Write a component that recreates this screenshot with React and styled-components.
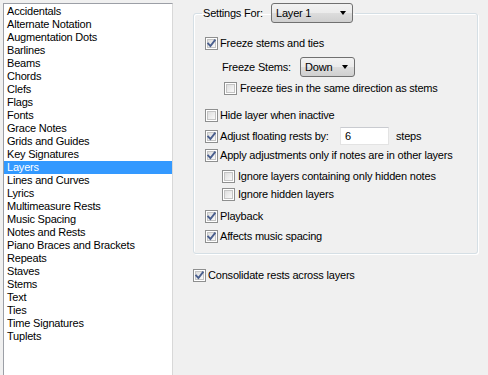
import styled, { createGlobalStyle } from "styled-components";

const Global = createGlobalStyle`
  html, body {
    margin: 0;
    padding: 0;
    background: #f0f0f0;
    overflow: hidden;
    height: 375px;
  }
  body {
    font-family: "Liberation Sans", Arial, sans-serif;
    font-size: 11px;
    letter-spacing: -0.2px;
    color: #000;
  }
`;

const Page = styled.div`
  display: flex;
  align-items: flex-start;
  width: 488px;
  height: 375px;
`;

const ListBox = styled.div`
  margin: 3px 0 0 3px;
  width: 170px;
  height: 390px;
  box-sizing: border-box;
  background: #fff;
  border: 1px solid #9c9fa6;
  border-right-color: #d8d8d8;
  padding-top: 1px;
`;

const Item = styled.div`
  height: 13px;
  line-height: 13px;
  padding-left: 3px;
  white-space: nowrap;
  background: ${(p) => (p.selected ? "#3399ff" : "transparent")};
  color: ${(p) => (p.selected ? "#fff" : "#000")};
`;

const Side = styled.div`
  margin-left: 20px;
  display: flex;
  flex-direction: column;
`;

const Group = styled.fieldset`
  margin: 3px 0 0 0;
  padding: 0 0 8px 8px;
  width: 285px;
  box-sizing: border-box;
  border: 1px solid #d5dfe5;
  border-radius: 3px;
  box-shadow: inset 1px 1px 0 #fff, 1px 1px 0 #fff;
  min-inline-size: 0;
`;

const Legend = styled.legend`
  padding: 0 2px 0 1px;
  display: flex;
  align-items: center;
  height: 20px;
`;

const LegendLabel = styled.span`
  width: 68px;
`;

const Combo = styled.div`
  display: flex;
  align-items: center;
  justify-content: space-between;
  box-sizing: border-box;
  width: ${(p) => p.width}px;
  height: ${(p) => p.height || 20}px;
  padding: 0 6px 0 4px;
  border: 1px solid #707070;
  border-radius: 3px;
  background: linear-gradient(#f2f2f2 0%, #ebebeb 50%, #dddddd 50%, #cfcfcf 100%);
`;

const Arrow = styled.span`
  width: 0;
  height: 0;
  border-left: 3.5px solid transparent;
  border-right: 3.5px solid transparent;
  border-top: 4px solid #000;
`;

const Row = styled.div`
  display: flex;
  align-items: center;
  height: ${(p) => p.h || 18}px;
  margin-top: ${(p) => p.top || 0}px;
  padding-left: ${(p) => p.indent || 0}px;
  white-space: nowrap;
`;

const BoxWrap = styled.span`
  display: inline-flex;
  width: 13px;
  height: 13px;
  margin-right: ${(p) => p.gap || 3}px;
  flex: none;
`;

const FieldLabel = styled.span`
  width: ${(p) => p.width}px;
`;

const TextBox = styled.div`
  box-sizing: border-box;
  width: 49px;
  height: 18px;
  background: #fff;
  border: 1px solid #e3e3e3;
  border-top-color: #c9cbd0;
  padding: 1px 0 0 4px;
  line-height: 15px;
  margin-right: 7px;
`;

function Check({ checked, gap }) {
  return (
    <BoxWrap gap={gap}>
      <svg width="13" height="13" viewBox="0 0 13 13">
        <defs>
          <linearGradient id="cbg" x1="0" y1="0" x2="1" y2="1">
            <stop offset="0" stopColor="#dcdcdc" />
            <stop offset="1" stopColor="#fbfbfb" />
          </linearGradient>
        </defs>
        <rect x="0.5" y="0.5" width="12" height="12" fill="#fff" stroke="#8e8f8f" />
        <rect x="2.5" y="2.5" width="8" height="8" fill="url(#cbg)" stroke="#c4c4c4" />
        {checked && (
          <path
            d="M3.2 6.6 L5.4 9 L9.8 3.4"
            fill="none"
            stroke="#4a5f8e"
            strokeWidth="1.9"
            strokeLinecap="square"
          />
        )}
      </svg>
    </BoxWrap>
  );
}

const items = [
  "Accidentals",
  "Alternate Notation",
  "Augmentation Dots",
  "Barlines",
  "Beams",
  "Chords",
  "Clefs",
  "Flags",
  "Fonts",
  "Grace Notes",
  "Grids and Guides",
  "Key Signatures",
  "Layers",
  "Lines and Curves",
  "Lyrics",
  "Multimeasure Rests",
  "Music Spacing",
  "Notes and Rests",
  "Piano Braces and Brackets",
  "Repeats",
  "Staves",
  "Stems",
  "Text",
  "Ties",
  "Time Signatures",
  "Tuplets",
];

export default function App() {
  return (
    <>
      <Global />
      <Page>
        <ListBox>
          {items.map((it) => (
            <Item key={it} selected={it === "Layers"}>
              {it}
            </Item>
          ))}
        </ListBox>
        <Side>
          <Group>
            <Legend>
              <LegendLabel>Settings For:</LegendLabel>
              <Combo width={82}>
                <span>Layer 1</span>
                <Arrow />
              </Combo>
            </Legend>
            <Row top={11} indent={3}>
              <Check checked gap={2} />
              Freeze stems and ties
            </Row>
            <Row top={5} indent={20} h={20}>
              <FieldLabel width={78}>Freeze Stems:</FieldLabel>
              <Combo width={55}>
                <span>Down</span>
                <Arrow />
              </Combo>
            </Row>
            <Row top={2} indent={22}>
              <Check />
              Freeze ties in the same direction as stems
            </Row>
            <Row top={9} indent={3}>
              <Check gap={2} />
              Hide layer when inactive
            </Row>
            <Row top={3} indent={3}>
              <Check checked gap={2} />
              <FieldLabel width={120}>Adjust floating rests by:</FieldLabel>
              <TextBox>6</TextBox>
              steps
            </Row>
            <Row top={1} indent={3}>
              <Check checked gap={2} />
              Apply adjustments only if notes are in other layers
            </Row>
            <Row top={3} indent={20}>
              <Check />
              Ignore layers containing only hidden notes
            </Row>
            <Row top={0} indent={20}>
              <Check />
              Ignore hidden layers
            </Row>
            <Row top={4} indent={3}>
              <Check checked gap={2} />
              Playback
            </Row>
            <Row top={2} indent={3}>
              <Check checked gap={2} />
              Affects music spacing
            </Row>
          </Group>
          <Row top={12}>
            <Check checked gap={2} />
            Consolidate rests across layers
          </Row>
        </Side>
      </Page>
    </>
  );
}
